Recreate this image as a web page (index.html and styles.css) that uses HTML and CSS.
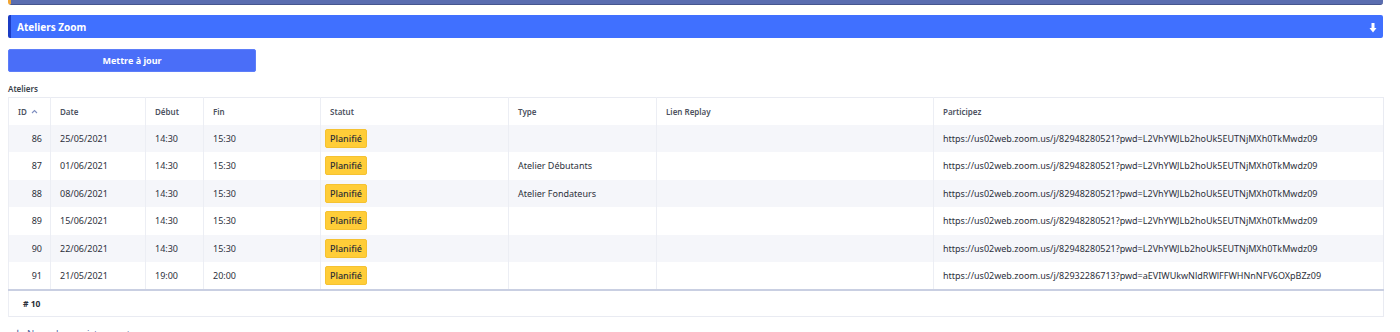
FILE: index.html
```html
<!DOCTYPE html>
<html lang="fr">
<head>
<meta charset="utf-8">
<title>Ateliers Zoom</title>
<link rel="stylesheet" href="styles.css">
</head>
<body>
<div class="page">
  <div class="topbar"></div>
  <div class="panel-head">
    <span class="panel-title">Ateliers Zoom</span>
    <svg class="dl-icon" width="8" height="10" viewBox="0 0 8 10"><rect x="2.5" y="0" width="3" height="5" fill="#fff"/><path d="M0.5 5 H7.5 L4 9.5 Z" fill="#fff"/></svg>
  </div>
  <button class="btn">Mettre à jour</button>
  <div class="label">Ateliers</div>
  <table class="grid">
    <colgroup>
      <col style="width:42px"><col style="width:95px"><col style="width:58px"><col style="width:117px"><col style="width:188px"><col style="width:148px"><col style="width:277px"><col style="width:450px">
    </colgroup>
    <thead>
      <tr>
        <th class="c-id">ID <svg class="sort" width="7" height="5" viewBox="0 0 7 5"><path d="M1 4 L3.5 1.5 L6 4" fill="none" stroke="#7f8fc0" stroke-width="1.1"/></svg></th>
        <th>Date</th><th>Début</th><th>Fin</th><th>Statut</th><th>Type</th><th>Lien Replay</th><th>Participez</th>
      </tr>
    </thead>
    <tbody>
      <tr><td class="num">86</td><td>25/05/2021</td><td>14:30</td><td>15:30</td><td class="st"><span class="badge">Planifié</span></td><td></td><td></td><td>https://us02web.zoom.us/j/82948280521?pwd=L2VhYWJLb2hoUk5EUTNjMXh0TkMwdz09</td></tr>
      <tr><td class="num">87</td><td>01/06/2021</td><td>14:30</td><td>15:30</td><td class="st"><span class="badge">Planifié</span></td><td>Atelier Débutants</td><td></td><td>https://us02web.zoom.us/j/82948280521?pwd=L2VhYWJLb2hoUk5EUTNjMXh0TkMwdz09</td></tr>
      <tr><td class="num">88</td><td>08/06/2021</td><td>14:30</td><td>15:30</td><td class="st"><span class="badge">Planifié</span></td><td>Atelier Fondateurs</td><td></td><td>https://us02web.zoom.us/j/82948280521?pwd=L2VhYWJLb2hoUk5EUTNjMXh0TkMwdz09</td></tr>
      <tr><td class="num">89</td><td>15/06/2021</td><td>14:30</td><td>15:30</td><td class="st"><span class="badge">Planifié</span></td><td></td><td></td><td>https://us02web.zoom.us/j/82948280521?pwd=L2VhYWJLb2hoUk5EUTNjMXh0TkMwdz09</td></tr>
      <tr><td class="num">90</td><td>22/06/2021</td><td>14:30</td><td>15:30</td><td class="st"><span class="badge">Planifié</span></td><td></td><td></td><td>https://us02web.zoom.us/j/82948280521?pwd=L2VhYWJLb2hoUk5EUTNjMXh0TkMwdz09</td></tr>
      <tr><td class="num">91</td><td>21/05/2021</td><td>19:00</td><td>20:00</td><td class="st"><span class="badge">Planifié</span></td><td></td><td></td><td>https://us02web.zoom.us/j/82932286713?pwd=aEVIWUkwNldRWlFFWHNnNFV6OXpBZz09</td></tr>
    </tbody>
    <tfoot>
      <tr><td colspan="8" class="count"># 10</td></tr>
    </tfoot>
  </table>
  <div class="new-rec"><span class="plus">+</span> Nouvel enregistrement</div>
</div>
</body>
</html>
```
FILE: styles.css
```css
* { box-sizing: border-box; }
html, body { margin: 0; padding: 0; background: #fff; }
body { font-family: "Noto Sans", "Open Sans", sans-serif; color: #2b2f3a; }
.page { width: 1375px; margin: 0 8px; display: flex; flex-direction: column; align-items: flex-start; }
.topbar {
  width: 100%; height: 5px; background: #5a6db0;
  border-bottom: 1px solid #46568f; border-left: 3px solid #f3a531;
  border-radius: 0 0 3px 3px;
}
.panel-head {
  width: 100%; height: 23px; margin-top: 10px;
  background: #4070ff; border-left: 3px solid #1b3cc4; border-radius: 2px;
  display: flex; align-items: center; justify-content: space-between;
  padding: 0 6px 0 6px;
}
.panel-title { color: #fff; font-weight: 700; font-size: 10px; }
.dl-icon { display: block; margin-top: 3px; }
.btn {
  margin-top: 11px; width: 248px; height: 23px;
  background: #4a6ef8; border: 1px solid #5d7ef9; border-radius: 2px;
  color: #fff; font-family: inherit; font-weight: 700; font-size: 9px; padding: 0;
}
.label { margin-top: 11px; font-size: 8px; font-weight: 600; color: #3a3f4a; line-height: 12px; }
.grid {
  margin-top: 2px; width: 1375px; table-layout: fixed; border-collapse: collapse;
  border: 1px solid #e9ebf2; font-size: 9px;
}
.grid th {
  height: 27px; text-align: left; font-weight: 600; color: #4d5260; font-size: 8px;
  padding: 0 9px; border-left: 1px solid #eceef4; background: #fff;
}
.grid td {
  height: 27.5px; padding: 0 9px; border-left: 1px solid #eceef4; white-space: nowrap; overflow: hidden;
  color: #2d313c;
}
.grid tbody tr:nth-child(odd) td { background: #f5f6fa; }
.grid tbody tr:last-child td { border-bottom: 2px solid #c9cfe2; }
.grid td.num { text-align: right; padding-right: 8px; }
.grid td.st { padding-left: 4px; }
.sort { margin-left: 2px; vertical-align: 1px; }
.badge {
  display: inline-block; background: #ffcd38; border: 1px solid #f5c232; border-radius: 2px;
  padding: 0 4px; line-height: 17px; color: #2d2f36; font-weight: 500;
}
.grid tfoot td { height: 27px; font-weight: 700; padding-left: 14px; font-size: 8.5px; color: #2b2f3a; }
.new-rec { margin-top: 6px; margin-left: 6px; font-size: 9.5px; color: #4d5fa0; }
.plus { font-size: 13px; margin-right: 3px; }
```
